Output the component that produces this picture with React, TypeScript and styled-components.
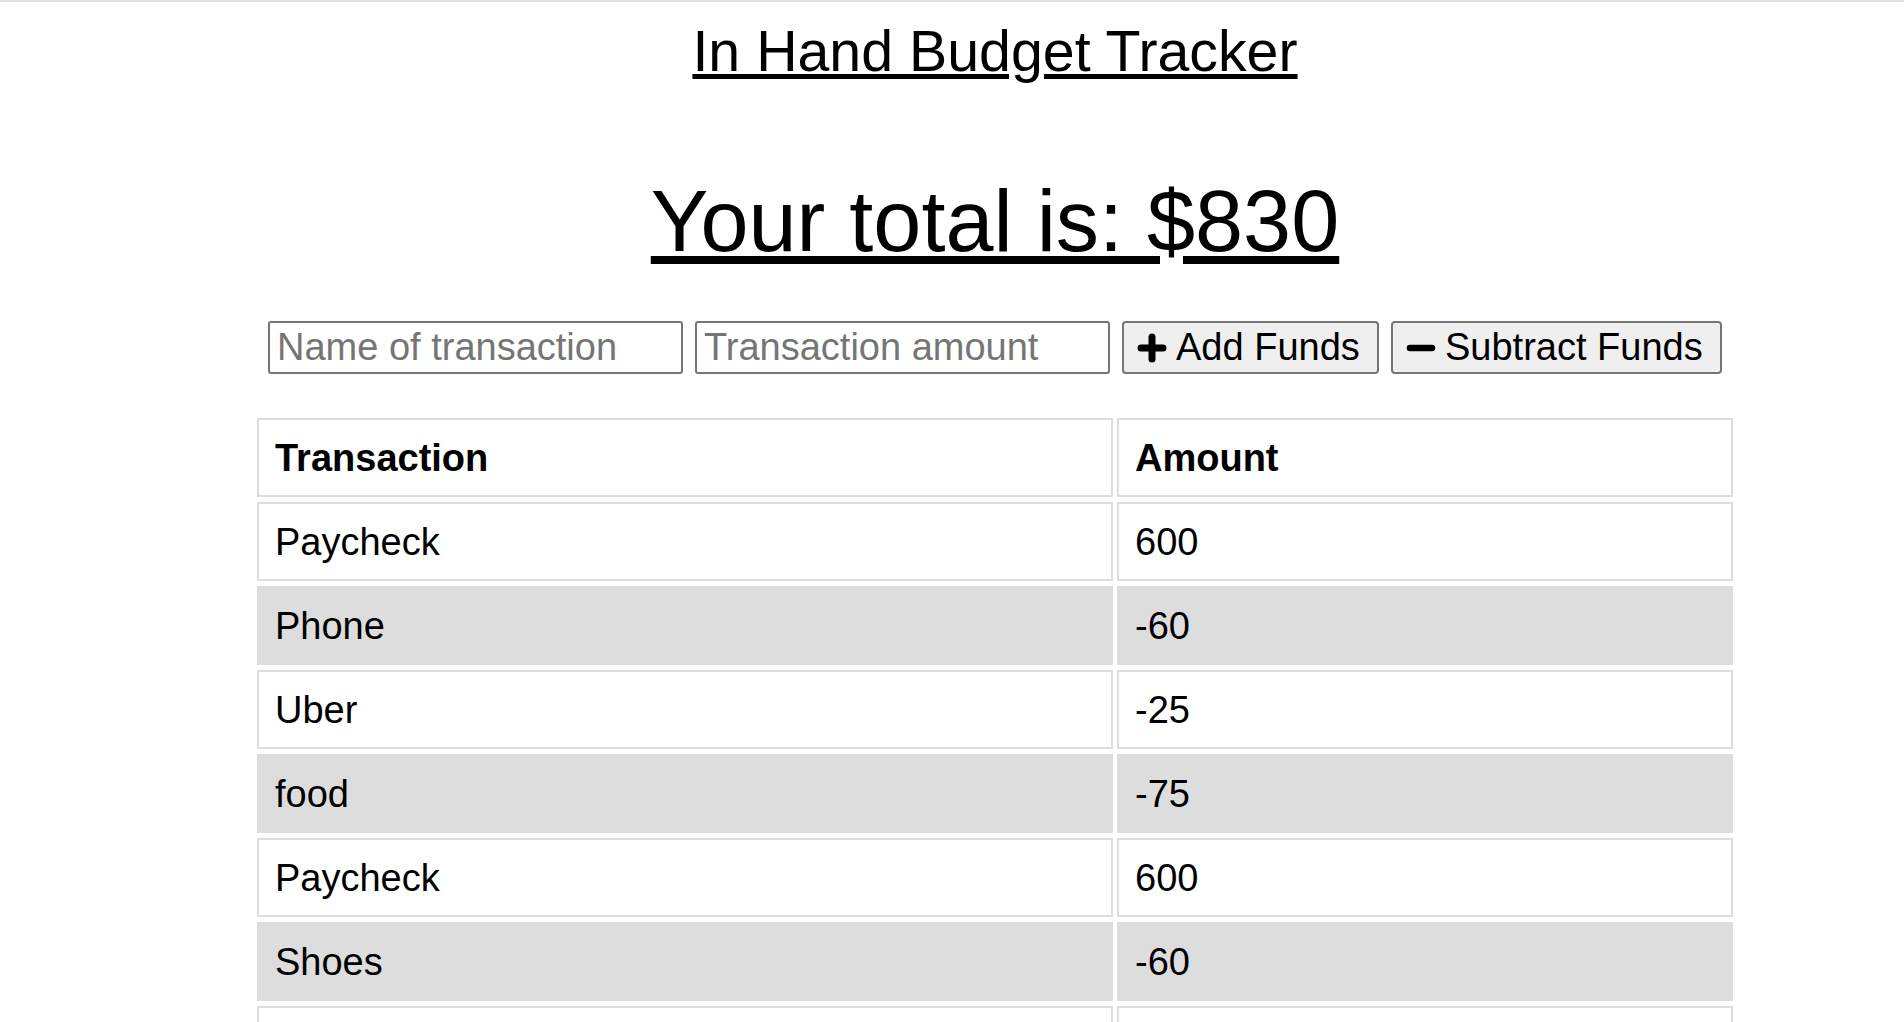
import React from "react";
import styled, { createGlobalStyle } from "styled-components";

const GlobalStyle = createGlobalStyle`
  *, *::before, *::after { box-sizing: border-box; }
  html, body { margin: 0; padding: 0; background: #ffffff; }
  body {
    font-family: "Liberation Sans", Arial, sans-serif;
    color: #000000;
  }
`;

const TopRule = styled.div`
  height: 2px;
  background: #e2e2e2;
`;

const Page = styled.main`
  display: flex;
  flex-direction: column;
  align-items: center;
  padding-left: 86px;
`;

const Title = styled.h1`
  margin: 16px 0 0;
  font-size: 57.3px;
  font-weight: 400;
  line-height: normal;
  text-decoration: underline;
`;

const Total = styled.h2`
  margin: 88px 0 0;
  font-size: 86.4px;
  font-weight: 400;
  line-height: normal;
  text-decoration: underline;
`;

const Form = styled.form`
  display: flex;
  gap: 12px;
  margin-top: 50px;
`;

const TextInput = styled.input`
  width: 415px;
  height: 53px;
  padding: 0 7px;
  border: 2px solid #767676;
  border-radius: 3px;
  font-family: "Liberation Sans", Arial, sans-serif;
  font-size: 38px;
  color: #000;
  &::placeholder { color: #757575; }
`;

const ActionButton = styled.button<{ $w: number }>`
  display: flex;
  align-items: center;
  gap: 9px;
  width: ${(p) => p.$w}px;
  height: 53px;
  padding: 0 13px;
  border: 2px solid #767676;
  border-radius: 4px;
  background: #efefef;
  font-family: "Liberation Sans", Arial, sans-serif;
  font-size: 38px;
  color: #000;
  white-space: nowrap;
  svg { flex: none; }
`;

const Table = styled.table`
  margin-top: 39px;
  width: 1484px;
  border-collapse: separate;
  border-spacing: 4px 5px;
  table-layout: fixed;
  font-size: 38px;
`;

const Cell = styled.td<{ $shade: boolean; $head?: boolean }>`
  height: 79px;
  padding: 0 16px;
  border: 2px solid #dddddd;
  background: ${(p) => (p.$shade ? "#dddddd" : "#ffffff")};
  font-weight: ${(p) => (p.$head ? 700 : 400)};
  text-align: left;
  line-height: 42px;
  vertical-align: middle;
`;

const Col = styled.col<{ $w: number }>`
  width: ${(p) => p.$w}px;
`;

const PlusIcon = () => (
  <svg width="30" height="30" viewBox="0 0 30 30" aria-hidden="true">
    <path d="M15 4V26M4 15H26" stroke="#000" strokeWidth="7" strokeLinecap="round" fill="none" />
  </svg>
);

const MinusIcon = () => (
  <svg width="30" height="30" viewBox="0 0 30 30" aria-hidden="true">
    <path d="M4 15H26" stroke="#000" strokeWidth="6.5" strokeLinecap="round" fill="none" />
  </svg>
);

const rows: [string, string][] = [
  ["Paycheck", "600"],
  ["Phone", "-60"],
  ["Uber", "-25"],
  ["food", "-75"],
  ["Paycheck", "600"],
  ["Shoes", "-60"],
  ["Rent", "-150"],
];

export default function App() {
  return (
    <>
      <GlobalStyle />
      <TopRule />
      <Page>
        <Title>In Hand Budget Tracker</Title>
        <Total>Your total is: $830</Total>
        <Form onSubmit={(e) => e.preventDefault()}>
          <TextInput type="text" placeholder="Name of transaction" />
          <TextInput type="number" placeholder="Transaction amount" />
          <ActionButton type="button" $w={257}>
            <PlusIcon />
            Add Funds
          </ActionButton>
          <ActionButton type="button" $w={331}>
            <MinusIcon />
            Subtract Funds
          </ActionButton>
        </Form>
        <Table>
          <colgroup>
            <Col $w={856} />
            <Col $w={616} />
          </colgroup>
          <thead>
            <tr>
              <Cell as="th" $shade={false} $head>Transaction</Cell>
              <Cell as="th" $shade={false} $head>Amount</Cell>
            </tr>
          </thead>
          <tbody>
            {rows.map(([name, amt], i) => (
              <tr key={i}>
                <Cell $shade={i % 2 === 1}>{name}</Cell>
                <Cell $shade={i % 2 === 1}>{amt}</Cell>
              </tr>
            ))}
          </tbody>
        </Table>
      </Page>
    </>
  );
}
